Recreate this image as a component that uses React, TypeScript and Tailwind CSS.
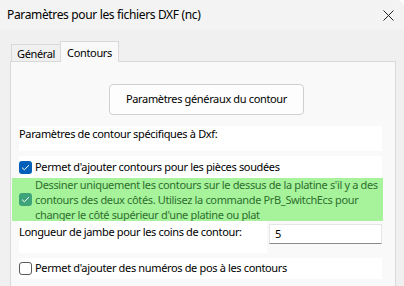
import React from "react";

function Check({ checked, tint }: { checked: boolean; tint?: boolean }) {
  if (!checked) {
    return (
      <div className="w-[13px] h-[13px] rounded-[3px] border border-[#5a5a5a] bg-white shrink-0" />
    );
  }
  return (
    <div
      className={`w-[13px] h-[13px] rounded-[3px] shrink-0 flex items-center justify-center ${
        tint ? "bg-[#3fa37a]" : "bg-[#005fb8]"
      }`}
    >
      <svg width="9" height="7" viewBox="0 0 9 7" fill="none">
        <path d="M1 3.6 L3.3 5.8 L8 1.2" stroke="white" strokeWidth="1" />
      </svg>
    </div>
  );
}

export default function App() {
  return (
    <div
      className="w-[404px] h-[286px] bg-[#f0f0f0] overflow-hidden rounded-tr-[8px] text-[11px] tracking-[-0.35px] text-black relative"
      style={{ fontFamily: '"Noto Sans", "Liberation Sans", sans-serif' }}
    >
      {/* title bar */}
      <div className="h-[30px] bg-[#f3f3f3] flex items-center pl-[7px] pr-[10px] justify-between">
        <span className="text-[12px] tracking-[-0.35px] leading-none">Paramètres pour les fichiers DXF (nc)</span>
        <svg width="11" height="11" viewBox="0 0 11 11">
          <path d="M0.5 0.5 L10.5 10.5 M10.5 0.5 L0.5 10.5" stroke="#222" strokeWidth="1" />
        </svg>
      </div>

      {/* tabs */}
      <div className="pl-[10px] pt-[11px] flex items-end h-[31px]">
        <div className="h-[17px] ml-[1px] px-[5px] border border-b-0 border-r-0 border-[#d9d9d9] flex items-center leading-none">
          Général
        </div>
        <div className="h-[21px] px-[6px] border border-b-0 border-[#d9d9d9] bg-[#f9f9f9] flex items-center leading-none relative top-[1px] z-10">
          Contours
        </div>
      </div>

      {/* panel */}
      <div className="ml-[10px] w-[386px] h-[240px] border border-[#d9d9d9] bg-[#f9f9f9] pt-[22px]">
        <div className="flex justify-center pl-[7px]">
          <div className="w-[195px] h-[31px] rounded-[4px] border border-[#d0d0d0] bg-[#fdfdfd] flex items-center justify-center">
            Paramètres généraux du contour
          </div>
        </div>

        <div className="ml-[8px] mr-[13px] mt-[11px] h-[25px] bg-white leading-[15px] whitespace-nowrap">
          Paramètres de contour spécifiques à Dxf:
        </div>

        <div className="ml-[8px] mr-[13px] mt-[5px] h-[22px] bg-white flex items-center gap-[3px] whitespace-nowrap">
          <Check checked />
          <span>Permet d'ajouter contours pour les pièces soudées</span>
        </div>

        <div className="ml-[1px] mr-[12px] h-[43px] bg-[#a6f39b] flex items-center pl-[7px] gap-[3px] text-[#2e6f2e] whitespace-nowrap">
          <Check checked tint />
          <span className="leading-[15px]">
            Dessiner uniquement les contours sur le dessus de la platine s'il y a des
            <br />
            contours des deux côtés. Utilisez la commande PrB_SwitchEcs pour
            <br />
            changer le côté supérieur d'une platine ou plat
          </span>
        </div>

        <div className="ml-[8px] mr-[13px] flex h-[32px]">
          <div className="w-[248px] bg-white pt-[3px] leading-[15px] whitespace-nowrap">
            Longueur de jambe pour les coins de contour:
          </div>
          <div className="ml-[2px] mt-[3px] w-[113px] h-[20px] bg-white border border-[#e5e5e5] border-b-[#8a8a8a] flex items-center pl-[5px]">
            5
          </div>
        </div>

        <div className="ml-[8px] mr-[13px] mt-[5px] h-[21px] bg-white flex items-center gap-[3px] whitespace-nowrap">
          <Check checked={false} />
          <span>Permet d'ajouter des numéros de pos à les contours</span>
        </div>
      </div>
    </div>
  );
}
